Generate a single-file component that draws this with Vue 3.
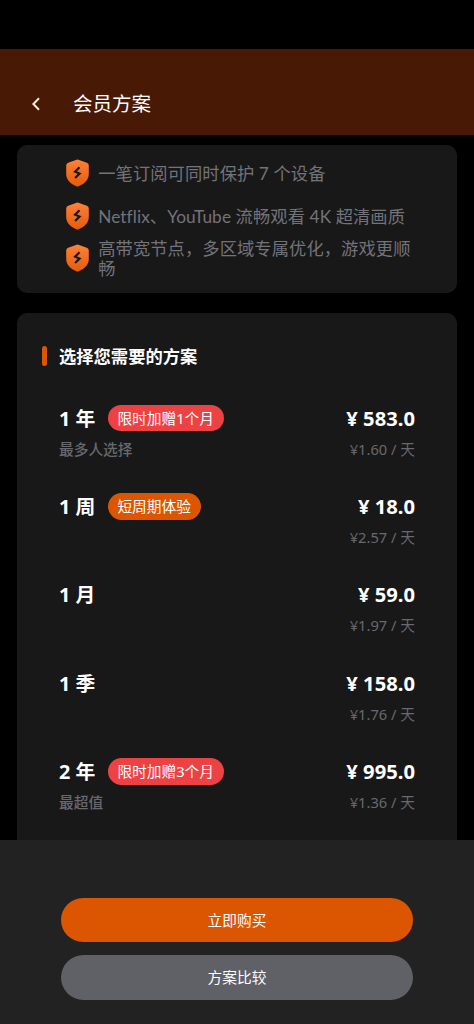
<script setup>
const features = [
  '一笔订阅可同时保护 7 个设备',
  'Netflix、YouTube 流畅观看 4K 超清画质',
  '高带宽节点，多区域专属优化，游戏更顺畅',
]
const plans = [
  { count: '1', unit: '年', tag: '限时加赠1个月', note: '最多人选择', price: '583.0', daily: '1.60' },
  { count: '1', unit: '周', tag: '短周期体验', trial: true, price: '18.0', daily: '2.57' },
  { count: '1', unit: '月', price: '59.0', daily: '1.97' },
  { count: '1', unit: '季', price: '158.0', daily: '1.76' },
  { count: '2', unit: '年', tag: '限时加赠3个月', note: '最超值', price: '995.0', daily: '1.36' },
]
</script>

<template>
  <div class="screen">
    <header class="bar">
      <svg class="back" viewBox="0 0 12 16" aria-hidden="true">
        <path d="M9 2.3 3.4 8 9 13.7" />
      </svg>
      <h1>会员方案</h1>
    </header>

    <main class="content">
      <ul class="card features">
        <li v-for="text in features" :key="text">
          <svg class="shield" viewBox="0 0 23 28" aria-hidden="true">
            <defs>
              <linearGradient id="shieldFill" x1="0" y1="0" x2="0" y2="1">
                <stop offset="0" stop-color="#ff8138" />
                <stop offset="1" stop-color="#e55b0c" />
              </linearGradient>
            </defs>
            <path
              fill="url(#shieldFill)"
              d="M10.6.7q.9-.4 1.8 0l8.4 3.1q2 .8 2 2.7v8.6c0 6-4.6 9.9-10.2 12.2q-1.1.5-2.2 0C4.8 25 .2 21.1.2 15.1V6.5q0-1.9 2-2.7Z"
            />
            <path class="bolt" d="M13.5 8.2 9.1 12.7l4.5 1.9-4.5 4.4" />
          </svg>
          <span>{{ text }}</span>
        </li>
      </ul>

      <section class="card plans">
        <h2>选择您需要的方案</h2>
        <div v-for="plan in plans" :key="plan.price" class="plan">
          <div class="line">
            <span class="term">{{ plan.count }} {{ plan.unit }}</span>
            <span v-if="plan.tag" class="tag" :class="{ trial: plan.trial }">{{ plan.tag }}</span>
            <span class="price">¥ {{ plan.price }}</span>
          </div>
          <div class="line sub">
            <span class="note">{{ plan.note }}</span>
            <span class="daily">¥{{ plan.daily }} / 天</span>
          </div>
        </div>
      </section>
    </main>

    <footer class="actions">
      <button class="buy">立即购买</button>
      <button class="compare">方案比较</button>
    </footer>
  </div>
</template>

<style>
body {
  background: #000;
  overflow: hidden;
}
</style>

<style scoped>
.screen {
  height: 1024px;
  padding-top: 49px;
  box-sizing: border-box;
  display: flex;
  flex-direction: column;
  overflow: hidden;
  background: #000;
  color: #fff;
  font-family: "Noto Sans", "Noto Sans CJK SC", sans-serif;
}
.bar {
  flex: none;
  height: 86px;
  box-sizing: border-box;
  padding: 24px 0 0 30px;
  display: flex;
  align-items: center;
  background: #481904;
}
.back {
  width: 12px;
  height: 16px;
}
.back path {
  fill: none;
  stroke: #fbe9e0;
  stroke-width: 2;
}
h1 {
  margin: 0 0 0 31px;
  font-size: 19.5px;
  line-height: 28px;
  font-weight: 400;
}
.content {
  flex: 1;
  min-height: 0;
  overflow: hidden;
  padding: 10px 17px 0;
}
.card {
  background: #181818;
  border-radius: 10px;
}
.features {
  list-style: none;
  margin: 0;
  height: 148px;
  box-sizing: border-box;
  padding: 7.2px 40px 0 48.7px;
  font-family: Lato, "Noto Sans CJK SC", sans-serif;
  font-size: 17.25px;
  line-height: 20.3px;
  letter-spacing: 0.1px;
  font-variant-ligatures: none;
  color: #73737a;
}
.features li {
  display: flex;
  align-items: center;
  height: 42.5px;
}
.features span {
  padding-top: 2px;
}
.shield {
  flex: none;
  width: 23px;
  height: 28px;
  margin-right: 9.5px;
}
.bolt {
  fill: none;
  stroke: #181818;
  stroke-width: 2.2;
}
.plans {
  margin-top: 19.5px;
  height: 560px;
  box-sizing: border-box;
  padding: 30px 42px 0;
}
h2 {
  position: relative;
  margin: 0 0 35px;
  font-size: 17.3px;
  line-height: 27px;
  font-weight: 700;
}
h2::before {
  content: "";
  position: absolute;
  left: -17.5px;
  top: 3.5px;
  width: 5.3px;
  height: 20px;
  border-radius: 3px;
  background: #dc5600;
}
.plan {
  height: 88.4px;
}
.line {
  display: flex;
  align-items: center;
  height: 27px;
}
.term,
.price {
  font-size: 19.8px;
  line-height: 27px;
  font-weight: 700;
  white-space: pre;
}
.price {
  font-size: 20.2px;
}
.term {
  min-width: 36.5px;
}
.tag {
  margin-left: 12.2px;
  padding: 0 9.7px;
  height: 26.5px;
  border-radius: 14px;
  background: #ec4244;
  font-size: 14.7px;
  line-height: 26px;
}
.tag.trial {
  background: #dc5600;
}
.price,
.daily {
  margin-left: auto;
}
.sub {
  height: 34px;
  font-size: 14.7px;
  line-height: 34px;
  color: #68686f;
}
.note {
  font-weight: 500;
}
.actions {
  flex: none;
  height: 184px;
  box-sizing: border-box;
  padding: 57.5px 61px 0;
  display: flex;
  flex-direction: column;
  gap: 12.5px;
  background: #222;
}
button {
  height: 44.8px;
  padding: 0;
  border: 0;
  border-radius: 23px;
  color: #fff;
  font: 400 14.7px/44px "Noto Sans", "Noto Sans CJK SC", sans-serif;
}
.buy {
  background: #dc5500;
}
.compare {
  background: #606166;
}
</style>
